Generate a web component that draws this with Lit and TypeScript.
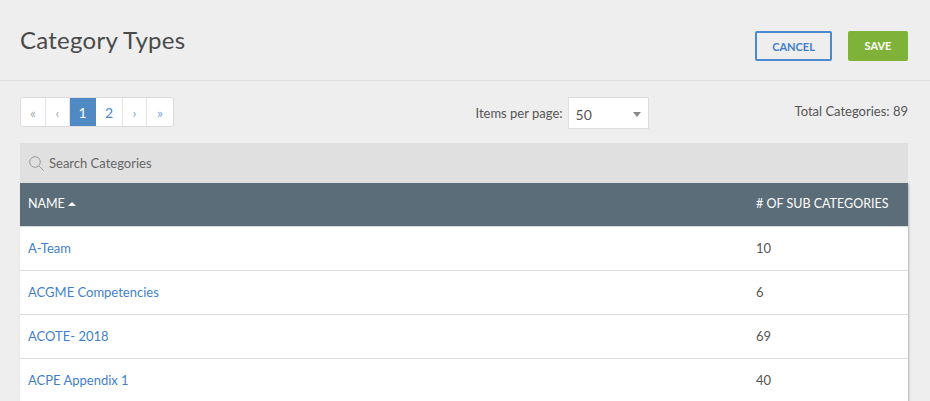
import { LitElement, html, css } from "lit";
import { customElement } from "lit/decorators.js";

const rows: [string, number][] = [
  ["A-Team", 10],
  ["ACGME Competencies", 6],
  ["ACOTE- 2018", 69],
  ["ACPE Appendix 1", 40],
];

@customElement("app-root")
export class AppRoot extends LitElement {
  static styles = css`
    :host { display: block; height: 401px; overflow: hidden; background: #eee; font-family: Lato, "Open Sans", sans-serif; color: #555; font-size: 13px; }
    .head { height: 81px; box-sizing: border-box; border-bottom: 1px solid #ddd; display: flex; justify-content: space-between; padding: 31px 22px 0 20px; margin-bottom: 16px; }
    h1 { margin: -5px 0 0; font-size: 24px; line-height: 28px; font-weight: 400; color: #4a4a4a; letter-spacing: 0.25px; }
    .actions { display: flex; gap: 16px; height: 30px; }
    .btn { box-sizing: border-box; height: 30px; display: flex; align-items: center; justify-content: center; font-size: 11px; font-weight: 700; border-radius: 2px; }
    .cancel { width: 77px; border: 2px solid #4a8ad0; color: #3f7fcb; }
    .save { width: 60px; background: #7fb239; color: #fff; padding-bottom: 2px; }
    .bar { display: flex; align-items: flex-start; padding: 0 22px 0 20px; height: 32px; margin-bottom: 14px; }
    .pages { display: flex; margin-right: auto; height: 30px; background: #fff; border: 1px solid #ddd; border-radius: 3px; box-sizing: border-box; }
    .pages span { display: flex; align-items: center; justify-content: center; border-right: 1px solid #e4e4e4; font-size: 14px; color: #4a88c7; box-sizing: border-box; }
    .pages span:last-child { border-right: 0; }
    .pages .dis { color: #aaa; }
    .pages .arrow { color: #7fa8d8; }
    .pages .on { background: #4f8ac4; color: #fff; border-right-color: transparent; }
    .ipp { display: flex; align-items: center; gap: 5px; margin-right: 146px; height: 32px; }
    .select { box-sizing: border-box; width: 81px; height: 32px; background: #fff; border: 1px solid #ddd; display: flex; align-items: center; justify-content: space-between; padding: 2px 7px 0 7px; font-size: 14px; }
    .caret { width: 0; height: 0; border-left: 4px solid transparent; border-right: 4px solid transparent; border-top: 5px solid #888; }
    .total { line-height: 28px; white-space: nowrap; }
    .wrap { margin: 0 22px 0 20px; }
    .search { height: 40px; background: #e0e0e0; display: flex; align-items: center; gap: 5px; padding: 0 0 1px 9px; box-sizing: border-box; color: #666; }
    .search svg { display: block; margin-top: 1px; }
    .table { background: #fff; box-shadow: 1px 1px 2px rgba(0,0,0,0.25); }
    .row { display: grid; grid-template-columns: 1fr 152px; align-items: center; height: 44px; box-sizing: border-box; border-bottom: 1px solid #ddd; padding: 0 0 2px 8px; }
    .th { background: #5a6d78; color: #fff; border-bottom: 1px solid #d8d8d8; font-size: 12.5px; white-space: nowrap; padding-bottom: 3px; }
    .th .name { display: flex; align-items: center; gap: 3px; }
    .up { width: 0; height: 0; border-left: 4px solid transparent; border-right: 4px solid transparent; border-bottom: 4px solid #fff; margin-top: 1px; }
    .row a { color: #3f7fcb; }
  `;

  render() {
    return html`
      <div class="head">
        <h1>Category Types</h1>
        <div class="actions">
          <div class="btn cancel">CANCEL</div>
          <div class="btn save">SAVE</div>
        </div>
      </div>
      <div class="bar">
        <div class="pages">
          <span class="dis" style="width:25px">«</span>
          <span class="dis" style="width:24px">‹</span>
          <span class="on" style="width:26px">1</span>
          <span style="width:27px">2</span>
          <span class="arrow" style="width:24px">›</span>
          <span class="arrow" style="width:26px">»</span>
        </div>
        <div class="ipp">
          <span>Items per page:</span>
          <div class="select"><span>50</span><i class="caret"></i></div>
        </div>
        <div class="total">Total Categories: 89</div>
      </div>
      <div class="wrap">
        <div class="search">
          <svg width="15" height="15" viewBox="0 0 15 15" fill="none" stroke="#999" stroke-width="1">
            <circle cx="6" cy="6" r="5.3"></circle>
            <path d="M10 10l4.5 4.5"></path>
          </svg>
          <span>Search Categories</span>
        </div>
        <div class="table">
          <div class="row th">
            <div class="name">NAME <i class="up"></i></div>
            <div># OF SUB CATEGORIES</div>
          </div>
          ${rows.map(([n, c]) => html`<div class="row"><a>${n}</a><div>${c}</div></div>`)}
        </div>
      </div>
    `;
  }
}
